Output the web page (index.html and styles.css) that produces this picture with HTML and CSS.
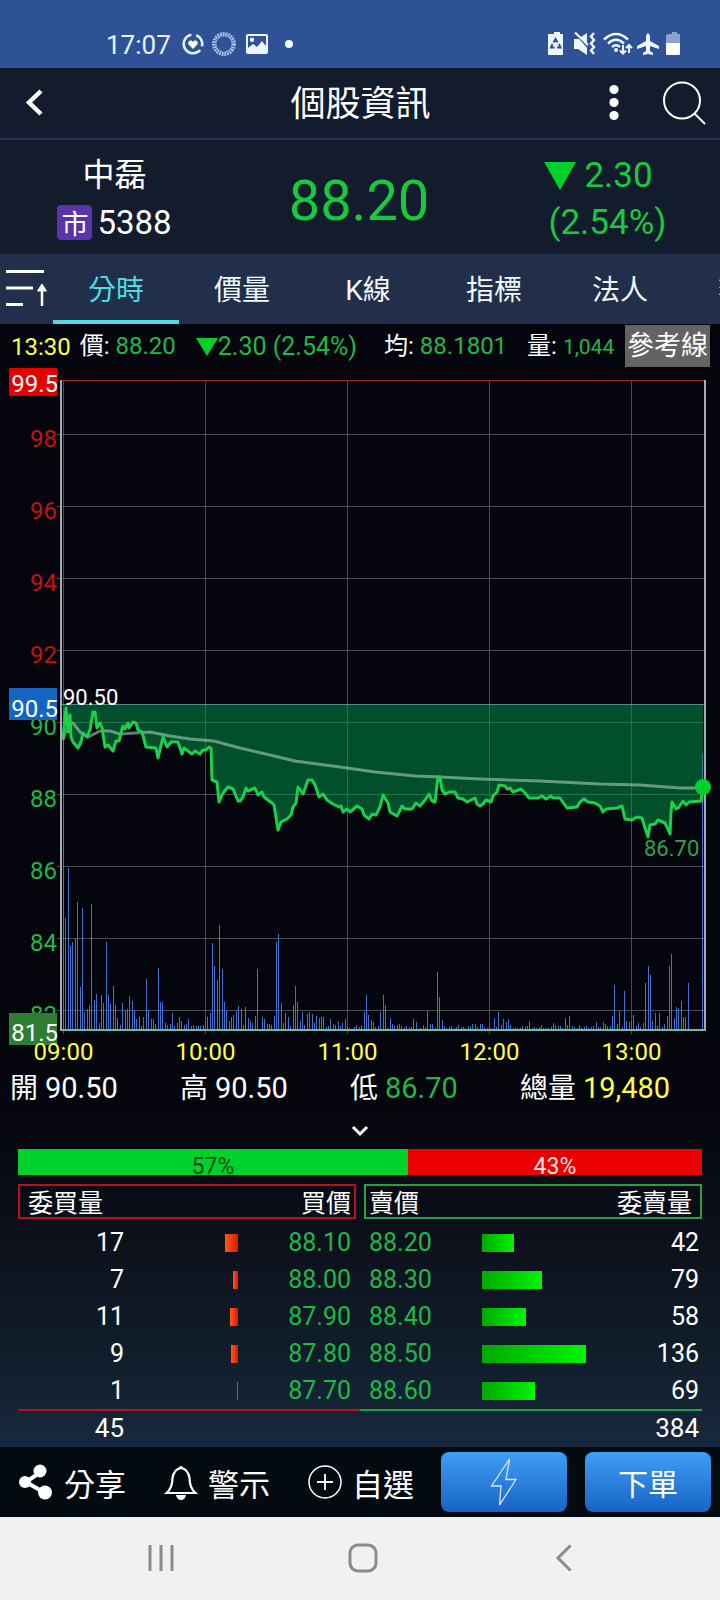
FILE: index.html
```html
<!DOCTYPE html>
<html lang="zh-Hant">
<head>
  <meta charset="UTF-8">
  <meta name="viewport" content="width=device-width, initial-scale=1">
  <title>個股資訊</title>
  <link rel="stylesheet" href="styles.css">
</head>
<body>
  <div class="status-bar">
    <span class="clock">17:07</span>
    <svg class="status-left" width="116" height="26" viewBox="0 0 116 26">
      <g fill="none" stroke="#e6f3ff" stroke-width="2.6">
        <path d="M15.200 4.300A9.300 9.300 0 0 1 21 15.400M19.100 19A9.300 9.300 0 1 1 10.400 3.800"/>
        <circle cx="43" cy="13" r="9.700" stroke="#a9bfe4" stroke-width="4.500" stroke-dasharray="1.800 0.800"/>
      </g>
      <path fill="#fff" d="M12 18l-4.200-4.200c-1.800-2.400 1-5.400 3.300-3.700l.9.800.9-.8c2.300-1.700 5.100 1.300 3.300 3.700z"/>
      <path fill="#eef6ff" fill-rule="evenodd" d="M67 3h18a2 2 0 0 1 2 2v16a2 2 0 0 1-2 2H67a2 2 0 0 1-2-2V5a2 2 0 0 1 2-2zm0 2v12l5-4 4 3 5-6 4 5V5zm4 1.500a2.200 2.200 0 1 1 0 4.400 2.200 2.200 0 0 1 0-4.400z"/>
      <circle cx="108" cy="13" r="4" fill="#fff"/>
    </svg>
    <svg class="status-right" width="134" height="26" viewBox="0 0 134 26">
      <path fill="#eef6ff" d="M4 3h3V1h6v2h3v20a1 1 0 0 1-1 1H2a1 1 0 0 1-1-1V4a1 1 0 0 1 1-1z"/>
      <path fill="none" stroke="#2f5296" stroke-width="2" d="M6.500 11.500l2-3.500 2 3.500M12 13l1.500 3.500H10M7.500 16.500H4l1.500-3.500"/>
      <path fill="#eef6ff" d="M27 8h4l9-6v22l-9-6h-4z"/>
      <path stroke="#2f5296" stroke-width="2.500" d="M28 2l14 15"/>
      <path stroke="#eef6ff" stroke-width="2.200" d="M28 1.500L41 14"/>
      <path fill="none" stroke="#eef6ff" stroke-width="2.400" d="M47 2l-3 3.500 3 3.500-3 3.500 3 3.500-3 3.500 3 3.500"/>
      <g fill="none" stroke="#eef6ff" stroke-width="2.400">
        <path d="M57 8.500q12-11 24 0M61 12.500q8-7.500 16 0M65 16q4-3.500 8 0"/>
        <path stroke-width="2" d="M76 14v8M73 19.500l3 3 3-3M82 22v-8M79 17l3-3 3 3"/>
      </g>
      <circle cx="69" cy="19" r="2" fill="#eef6ff"/>
      <path fill="#eef6ff" d="M101 2q2 1 2 4v4l9 5v3l-9-3v5l3 2v2l-5-1-5 1v-2l3-2v-5l-9 3v-3l9-5V6q0-3 2-4z"/>
      <path fill="#8aa2d0" d="M122 3h3V1h5v2h3v9h-14V4z"/>
      <path fill="#fff" d="M119 12h14v11a1 1 0 0 1-1 1h-12a1 1 0 0 1-1-1z"/>
    </svg>
  </div>

  <header class="title-bar">
    <button class="icon-btn" aria-label="返回">
      <svg width="20" height="30" viewBox="0 0 20 30"><path d="M16 3L4 14.500 16 26" fill="none" stroke="#fff" stroke-width="4.500"/></svg>
    </button>
    <h1>個股資訊</h1>
    <div class="title-actions">
      <button class="icon-btn" aria-label="更多">
        <svg width="10" height="38" viewBox="0 0 10 38" fill="#fff"><circle cx="5" cy="5.500" r="4.600"/><circle cx="5" cy="18.500" r="4.600"/><circle cx="5" cy="31.500" r="4.600"/></svg>
      </button>
      <button class="icon-btn" aria-label="搜尋">
        <svg width="44" height="44" viewBox="0 0 44 44" fill="none" stroke="#fff" stroke-width="2"><circle cx="20" cy="19.500" r="18"/><path d="M32.500 32.500L43 43"/></svg>
      </button>
    </div>
  </header>

  <section class="quote">
    <div class="stock">
      <div>中磊</div>
      <div class="stock-code"><span class="market">市</span>5388</div>
    </div>
    <div class="price">88.20</div>
    <div class="change">
      <div class="change-value"><svg width="32" height="28" viewBox="0 0 32 28"><path d="M0 0h32L16 28z" fill="#00d22b"/></svg>2.30</div>
      <div>(2.54%)</div>
    </div>
  </section>

  <nav class="tabs">
    <button class="sort-btn" aria-label="排序">
      <svg width="42" height="40" viewBox="0 0 42 40" stroke="#fff" fill="#fff">
        <path d="M0 3.500h38M0 20h27M0 36.500h17" stroke-width="3"/>
        <path d="M36 38V20" stroke-width="2.500"/>
        <path d="M36 16l4.500 7h-9z" stroke-width="1"/>
      </svg>
    </button>
    <a class="tab active" href="#">分時</a>
    <a class="tab" href="#">價量</a>
    <a class="tab" href="#">K線</a>
    <a class="tab" href="#">指標</a>
    <a class="tab" href="#">法人</a>
    <a class="tab" href="#">籌碼</a>
  </nav>

  <div class="info">
    <span class="time">13:30</span>
    <span class="info-price">價: <b>88.20</b></span>
    <span class="info-change"><svg width="22" height="18" viewBox="0 0 22 18"><path d="M0 0h22L11 18z" fill="#00d22b"/></svg>2.30 (2.54%)</span>
    <span class="info-avg">均: <b>88.1801</b></span>
    <span class="info-vol">量: <b>1,044</b></span>
    <button class="ref-btn">參考線</button>
  </div>

  <svg class="chart" viewBox="0 368 720 700">
    <rect x="62" y="380" width="643" height="650" fill="#05060d"/>
    <g id="grid"></g>
    <path id="volume" class="volume"></path>
    <path id="area" class="area"></path>
    <path class="ref-line" d="M62 704.500H704"/>
    <polyline id="average" class="average"></polyline>
    <polyline id="priceLine" class="price-line"></polyline>
    <path class="limit-line" d="M62 380.500H705"/>
    <path class="frame" d="M61 380V1031M705 380V1031"/>
    <path class="base-line" d="M61 1030H706"/>
    <circle cx="703" cy="787" r="8" fill="#00d22b"/>
    <text class="mark" x="63" y="705">90.50</text>
    <text class="mark low" x="644" y="856">86.70</text>
    <g id="labels"></g>
    <rect x="9" y="368" width="48" height="28" fill="#e60000"/>
    <rect x="9" y="688" width="48" height="32" fill="#1565c0"/>
    <rect x="9" y="1013" width="48" height="32" fill="#2e7d32"/>
    <g class="axis-y badge-text">
      <text x="58" y="392">99.5</text>
      <text x="58" y="717">90.5</text>
      <text x="58" y="1041">81.5</text>
    </g>
    <g id="times" class="axis-x"></g>
  </svg>

  <div class="stats">
    <span>開 <b>90.50</b></span>
    <span>高 <b>90.50</b></span>
    <span>低 <b class="down">86.70</b></span>
    <span>總量 <b class="total">19,480</b></span>
  </div>

  <section class="depth">
    <button class="expand" aria-label="展開">
      <svg width="18" height="12" viewBox="0 0 18 12"><path d="M2 2l7 7 7-7" fill="none" stroke="#fff" stroke-width="3"/></svg>
    </button>
    <div class="ratio">
      <div class="ratio-buy" style="width: 57%">57%</div>
      <div class="ratio-sell">43%</div>
    </div>
    <table>
      <colgroup>
        <col class="col-qty"><col><col class="col-price">
        <col class="col-gap">
        <col class="col-price"><col><col class="col-qty">
      </colgroup>
      <thead>
        <tr>
          <th class="buy first">委買量</th><th class="buy"></th><th class="buy last">買價</th>
          <th></th>
          <th class="sell first">賣價</th><th class="sell"></th><th class="sell last qty">委賣量</th>
        </tr>
      </thead>
      <tbody id="depthRows"></tbody>
      <tfoot>
        <tr>
          <td class="buy-qty">45</td><td colspan="5"></td><td class="sell-qty">384</td>
        </tr>
      </tfoot>
    </table>
  </section>

  <footer class="actions">
    <button class="action">
      <svg width="36" height="36" viewBox="0 0 36 36"><path d="M24 7L8 18l19 11" fill="none" stroke="#fff" stroke-width="4"/><g fill="#fff"><circle cx="22" cy="7" r="6.500"/><circle cx="7" cy="18" r="6"/><circle cx="27" cy="28.500" r="7"/></g></svg>
      分享
    </button>
    <button class="action">
      <svg width="34" height="36" viewBox="0 0 34 36"><path d="M2.500 29q6-5 6-15Q10 5 17 4q7 1 8.500 10 0 10 6 15z" fill="none" stroke="#fff" stroke-width="2.200"/><path d="M15 4a2 2 0 0 1 4 0zM12 31h10q-1 5-5 5t-5-5z" fill="#fff"/></svg>
      警示
    </button>
    <button class="action">
      <svg width="34" height="36" viewBox="0 0 34 36" fill="none" stroke="#fff"><circle cx="17" cy="18" r="16" stroke-width="1.500"/><path d="M9 18h16M17 10v16" stroke-width="1.800"/></svg>
      自選
    </button>
    <button class="order lightning" aria-label="閃電下單">
      <svg width="28" height="50" viewBox="0 0 28 50"><path d="M19.500 2L1.500 29h9.500L9.500 48 26 22.500H16z" fill="none" stroke="#d5e9ff" stroke-width="1.300"/></svg>
    </button>
    <button class="order">下單</button>
  </footer>

  <div class="nav-bar">
    <button aria-label="最近"><svg width="28" height="30" viewBox="0 0 28 30"><path d="M2 2v26M13 2v26M24 2v26" stroke="#8b8b8b" stroke-width="3"/></svg></button>
    <button aria-label="主畫面"><svg width="30" height="30" viewBox="0 0 30 30"><rect x="2" y="2" width="26" height="26" rx="8" fill="none" stroke="#8b8b8b" stroke-width="3"/></svg></button>
    <button aria-label="返回鍵"><svg width="18" height="30" viewBox="0 0 18 30"><path d="M15.500 2.500L3 15l12.500 12.500" fill="none" stroke="#8b8b8b" stroke-width="3"/></svg></button>
  </div>

  <script src="chart.js"></script>
</body>
</html>
```

FILE: styles.css
```css
* {
  box-sizing: border-box;
}

body {
  margin: 0;
  min-height: 100vh;
  display: flex;
  flex-direction: column;
  background: #05060d;
  color: #fff;
  font-family: Roboto, "Noto Sans CJK TC", sans-serif;
  overflow-x: hidden;
}

button {
  border: 0;
  padding: 0;
  background: none;
  color: inherit;
  font: inherit;
  display: flex;
  align-items: center;
  justify-content: center;
}

svg {
  display: block;
  flex: none;
}

b {
  font-weight: normal;
}

/* status bar */
.status-bar {
  height: 68px;
  padding: 20px 39px 0 106px;
  display: flex;
  align-items: center;
  background: #2f5296;
  color: #e6f3ff;
}

.clock {
  padding-top: 2px;
  font-size: 26px;
  line-height: 30px;
}

.status-left {
  margin-left: 10px;
}

.status-right {
  margin-left: auto;
}

/* title */
.title-bar {
  height: 72px;
  padding: 0 14px 0 25px;
  display: grid;
  grid-template-columns: 1fr auto 1fr;
  align-items: center;
  background: #121c2d;
  border-bottom: 2px solid #26305a;
}

.title-bar h1 {
  margin: 0;
  font-size: 35px;
  line-height: 50px;
  font-weight: normal;
  padding: 4px 10px 0 0;
}

.title-bar > .icon-btn {
  justify-self: start;
}

.title-actions {
  justify-self: end;
  display: flex;
  align-items: center;
  gap: 43px;
}

/* quote */
.quote {
  display: grid;
  grid-template-columns: 229px 1fr 231px;
  align-items: center;
  padding: 12px 0 8px;
  background: #121c2d;
  line-height: 47px;
  text-align: center;
}

.stock {
  font-size: 32px;
}

.stock-code {
  display: flex;
  align-items: center;
  justify-content: center;
  gap: 5px;
  font-size: 33px;
}

.market {
  width: 35px;
  height: 35px;
  border-radius: 4px;
  background: #5b34ab;
  font-size: 27px;
  line-height: 40px;
}

.price {
  padding-top: 4px;
  color: #17c93f;
  font-size: 56px;
}

.change {
  padding-left: 6px;
  color: #17c93f;
  font-size: 35px;
}

.change-value {
  display: flex;
  align-items: center;
  justify-content: center;
  gap: 8px;
  padding-right: 18px;
}

/* tabs */
.tabs {
  display: flex;
  height: 70px;
  overflow: hidden;
  background: #212f4a;
}

.sort-btn {
  flex: 0 0 53px;
  padding-bottom: 2px;
}

.tab {
  flex: 0 0 126px;
  padding-top: 2px;
  border-bottom: 4px solid transparent;
  color: #f2f8ff;
  font-size: 28px;
  line-height: 70px;
  text-align: center;
  text-decoration: none;
}

.tab.active {
  color: #4fdbe5;
  border-color: #4fdbe5;
}

/* info */
.info {
  height: 44px;
  padding: 0 10px 0 11px;
  display: flex;
  align-items: center;
  font-size: 24px;
  line-height: 42px;
  white-space: nowrap;
}

.info b,
.info-change {
  color: #1fb845;
}

.time {
  padding-top: 2px;
  color: #ffff45;
}

.info-price {
  margin-left: 9px;
}

.info-change {
  display: flex;
  align-items: center;
  margin-left: 20px;
  padding-top: 2px;
  font-size: 25px;
}

.info-avg {
  margin-left: 27px;
}

.info-vol {
  margin-left: 20px;
}

.info-vol b {
  font-size: 21px;
}

.ref-btn {
  height: 42px;
  margin-left: auto;
  padding: 0 2px;
  background: #636363;
  font-size: 27px;
}

/* chart */
.chart {
  width: 100%;
  font-size: 24px;
}

.grid-line {
  stroke: #494a54;
}

.volume {
  stroke: #4470d2;
  stroke-width: 1;
}

.area {
  fill: #00994a;
  fill-opacity: 0.5;
}

.ref-line {
  stroke: #4f8d86;
}

.average {
  fill: none;
  stroke: #a8ccb8;
  stroke-opacity: 0.6;
  stroke-width: 3;
}

.price-line {
  fill: none;
  stroke: #1bd04a;
  stroke-width: 3;
  stroke-linejoin: round;
}

.limit-line {
  stroke: #a82a2a;
}

.frame {
  stroke: #a3a9b5;
  stroke-width: 2;
}

.base-line {
  stroke: #79b89a;
  stroke-width: 2;
}

.mark {
  fill: #fff;
  font-size: 22px;
}

.mark.low {
  fill: #2ea34a;
}

.axis-y {
  text-anchor: end;
}

.up {
  fill: #c21212;
}

.dn {
  fill: #1fb845;
}

.badge-text {
  fill: #fff;
}

.axis-x {
  fill: #ffff45;
  text-anchor: middle;
}

/* open, high, low, volume */
.stats {
  display: grid;
  grid-template-columns: repeat(4, 1fr);
  padding: 0 30px 2px 10px;
  font-size: 28px;
  line-height: 40px;
  white-space: nowrap;
}

.stats b {
  font-size: 29px;
}

.stats .down {
  color: #1fb845;
}

.stats .total {
  color: #ffff45;
}

/* order book */
.depth {
  padding: 0 18px;
  background: linear-gradient(#05060d, #0d111c 40%, #12202f 80%, #18293f);
}

.expand {
  width: 100%;
  height: 38px;
  padding-top: 2px;
}

.ratio {
  display: flex;
  height: 26px;
  margin-bottom: 9px;
  font-size: 23px;
  line-height: 36px;
  text-align: center;
}

.ratio-buy {
  background: #00d22b;
  color: #0c4a12;
}

.ratio-sell {
  flex: 1;
  background: #ea0000;
  color: #ffe4e4;
}

table {
  width: 100%;
  table-layout: fixed;
  border-collapse: separate;
  border-spacing: 0;
  font-size: 25px;
}

.col-qty {
  width: 106px;
}

.col-price {
  width: 118px;
}

.col-gap {
  width: 8px;
}

th {
  height: 35px;
  padding: 5px 3px 0;
  line-height: 26px;
  font-weight: normal;
  text-align: left;
  white-space: nowrap;
}

th.buy {
  border: solid #b5121b;
  border-width: 2px 0;
}

th.sell {
  border: solid #23a03f;
  border-width: 2px 0;
}

th.first {
  border-left-width: 2px;
}

th.last {
  border-right-width: 2px;
  text-align: right;
}

th.buy.first,
th.qty {
  padding-left: 8px;
  padding-right: 8px;
}

td {
  height: 37px;
  padding: 0;
  line-height: 37px;
}

tbody tr:first-child td {
  height: 42px;
  padding-top: 5px;
}

td.buy-qty,
td.sell-qty {
  padding-right: 3px;
  text-align: right;
}

td.buy-qty {
  padding-right: 0;
}

.buy-price,
.sell-price {
  padding: 0 5px;
  color: #1fb845;
}

.buy-price {
  text-align: right;
}

.bar {
  height: 18px;
}

.bar-buy {
  margin-left: auto;
  background: linear-gradient(90deg, #ff5a14, #dc1800);
}

.bar-sell {
  background: linear-gradient(90deg, #00a800, #00f500);
}

tfoot tr {
  background: linear-gradient(90deg, #b5121b 50%, #23a03f 50%) top / 100% 2px no-repeat;
}

tfoot td {
  height: 38px;
  font-size: 26px;
  line-height: 38px;
}

/* bottom buttons */
.actions {
  height: 70px;
  padding: 0 9px 0 18px;
  display: flex;
  align-items: center;
  background: #030b10;
  font-size: 31px;
}

.action {
  gap: 10px;
  margin-right: 38px;
}

.action:nth-child(3) {
  margin-right: 0;
}

.order {
  flex: 0 0 126px;
  height: 60px;
  border-radius: 8px;
  background: linear-gradient(#3f9ff5, #1763c4);
  font-size: 30px;
}

.lightning {
  margin: 0 18px 0 auto;
}

/* system navigation */
.nav-bar {
  flex: 1;
  min-height: 84px;
  padding: 0 84px 2px 90px;
  display: grid;
  grid-template-columns: 1fr auto 1fr;
  align-items: center;
  background: #f1f1f1;
}

.nav-bar button {
  width: 144px;
  height: 48px;
}

.nav-bar button:last-child {
  justify-self: end;
}
```

FILE: chart.js
```javascript
const LEFT = 63.5;
const MINUTE = 142 / 60;
const BASE = 1030;
const REF_Y = 704.5;

const priceY = p => REF_Y - (p - 90.5) * 36;

const prices = [
  [63,738],[66,708],[68,732],[70,715],[71,737],[73,742],[78,748],[81,742],[83,733],[87,737],
  [90,730],[93,712],[95,712],[97,728],[100,723],[102,728],[105,747],[108,745],[113,751],[116,741],
  [119,741],[123,726],[125,729],[128,723],[129,728],[133,722],[136,723],[138,730],[142,732],[146,747],
  [156,748],[158,758],[163,737],[167,747],[171,742],[178,742],[182,754],[184,748],[192,754],[195,751],
  [200,754],[203,750],[206,750],[209,747],[211,748],[212,780],[217,782],[219,802],[223,793],[228,787],
  [233,789],[238,801],[240,801],[243,797],[246,788],[248,791],[255,788],[258,795],[262,792],[264,797],
  [272,803],[274,805],[278,830],[281,822],[287,819],[291,815],[293,807],[296,803],[298,787],[303,794],
  [308,780],[312,780],[315,785],[319,797],[323,794],[327,800],[333,804],[339,807],[341,806],[343,812],
  [347,809],[350,812],[357,806],[362,809],[364,815],[369,819],[372,814],[376,815],[380,807],[383,795],
  [388,803],[390,812],[397,816],[402,806],[405,809],[412,809],[416,803],[420,806],[425,800],[429,794],
  [432,801],[435,802],[438,777],[440,777],[442,790],[445,794],[449,792],[455,792],[458,798],[463,799],
  [467,802],[475,798],[477,804],[480,806],[483,804],[486,800],[491,802],[493,796],[497,792],[499,785],
  [505,786],[507,789],[510,788],[513,792],[521,789],[525,793],[529,798],[538,798],[542,796],[546,799],
  [551,796],[553,798],[560,798],[567,808],[577,807],[580,802],[584,799],[588,802],[595,803],[600,806],
  [603,812],[606,809],[617,808],[622,806],[625,819],[632,820],[637,817],[642,818],[645,828],[648,837],
  [650,825],[655,824],[658,820],[665,823],[667,827],[670,834],[671,813],[672,802],[676,809],[679,807],
  [683,801],[686,805],[689,802],[701,801],[703,787]
];

const averages = [
  [63,740],[68,725],[73,723],[80,732],[88,737],[100,731],[110,731],[120,734],[135,733],[150,732],
  [170,736],[190,739],[214,741],[225,744],[240,748],[270,755],[295,761],[340,767],[375,772],[415,776],
  [440,777],[480,779],[540,781],[600,784],[640,785],[680,788],[703,788]
];

// one value per minute, 09:00 to 13:30
const volumes = [
  320,112,162,84,88,92,128,43,122,18,21,25,126,30,36,7,35,27,88,35,26,44,25,12,5,27,19,21,34,29,
  20,11,13,4,13,51,20,11,11,6,62,28,28,7,5,6,17,4,7,13,9,5,6,11,4,5,4,4,4,5,
  9,13,17,87,64,50,105,61,28,20,9,13,15,19,24,21,5,23,12,9,7,14,61,1,13,11,6,6,5,14,
  88,96,27,7,17,13,4,25,44,28,9,18,5,16,18,16,7,14,12,13,13,3,4,11,6,5,9,4,7,11,
  4,2,1,3,5,3,5,18,35,15,10,8,3,4,18,35,25,2,12,6,4,5,6,4,3,4,3,3,11,8,
  1,2,5,3,19,6,6,2,58,33,10,4,2,3,4,2,3,5,3,3,2,4,3,6,6,3,6,6,3,2,
  3,2,12,3,18,5,11,8,11,5,2,2,2,2,4,4,4,9,2,3,2,3,5,2,2,2,3,7,5,4,
  4,2,12,5,14,4,3,2,5,2,3,4,2,3,4,8,3,3,8,6,4,4,14,45,6,19,3,39,9,8,
  9,15,4,7,3,7,47,64,55,9,17,4,17,3,6,14,64,76,12,23,22,29,13,13,47,0,0,0,0,0,
  276
];

const depth = [
  [17, "88.10", "88.20", 42],
  [7, "88.00", "88.30", 79],
  [11, "87.90", "88.40", 58],
  [9, "87.80", "88.50", 136],
  [1, "87.70", "88.60", 69]
];

function drawGrid() {
  let lines = "";
  let labels = "";
  for (let p = 98; p >= 82; p -= 2) {
    const y = priceY(p);
    lines += `<path class="grid-line" d="M57 ${y}H704"/>`;
    labels += `<text class="axis-y ${p > 90 ? "up" : "dn"}" x="57" y="${y + 12}">${p}</text>`;
  }
  let times = "";
  ["09:00", "10:00", "11:00", "12:00", "13:00"].forEach((t, i) => {
    const x = LEFT + i * 142;
    lines += `<path class="grid-line" d="M${x} 380V1034"/>`;
    times += `<text x="${x}" y="1060">${t}</text>`;
  });
  document.getElementById("grid").innerHTML = lines;
  document.getElementById("labels").innerHTML = labels;
  document.getElementById("times").innerHTML = times;
}

function drawSeries() {
  const line = prices.map(p => p.join(",")).join(" ");
  document.getElementById("priceLine").setAttribute("points", line);
  document.getElementById("average").setAttribute("points", averages.map(p => p.join(",")).join(" "));
  document.getElementById("area").setAttribute("d", `M63 ${REF_Y}L${line}V${REF_Y}Z`);
  document.getElementById("volume").setAttribute("d", volumes.map((v, i) => {
    const x = Math.floor(LEFT + i * MINUTE) + 0.5;
    return `M${x} ${BASE}v${-v}`;
  }).join(""));
}

function drawDepth() {
  const width = qty => Math.max(1, Math.round(qty * 0.765));
  document.getElementById("depthRows").innerHTML = depth.map(([bq, bp, sp, sq]) => `
    <tr>
      <td class="buy-qty">${bq}</td>
      <td><div class="bar bar-buy" style="width: ${width(bq)}px"></div></td>
      <td class="buy-price">${bp}</td>
      <td></td>
      <td class="sell-price">${sp}</td>
      <td><div class="bar bar-sell" style="width: ${width(sq)}px"></div></td>
      <td class="sell-qty">${sq}</td>
    </tr>`).join("");
}

drawGrid();
drawSeries();
drawDepth();
```
